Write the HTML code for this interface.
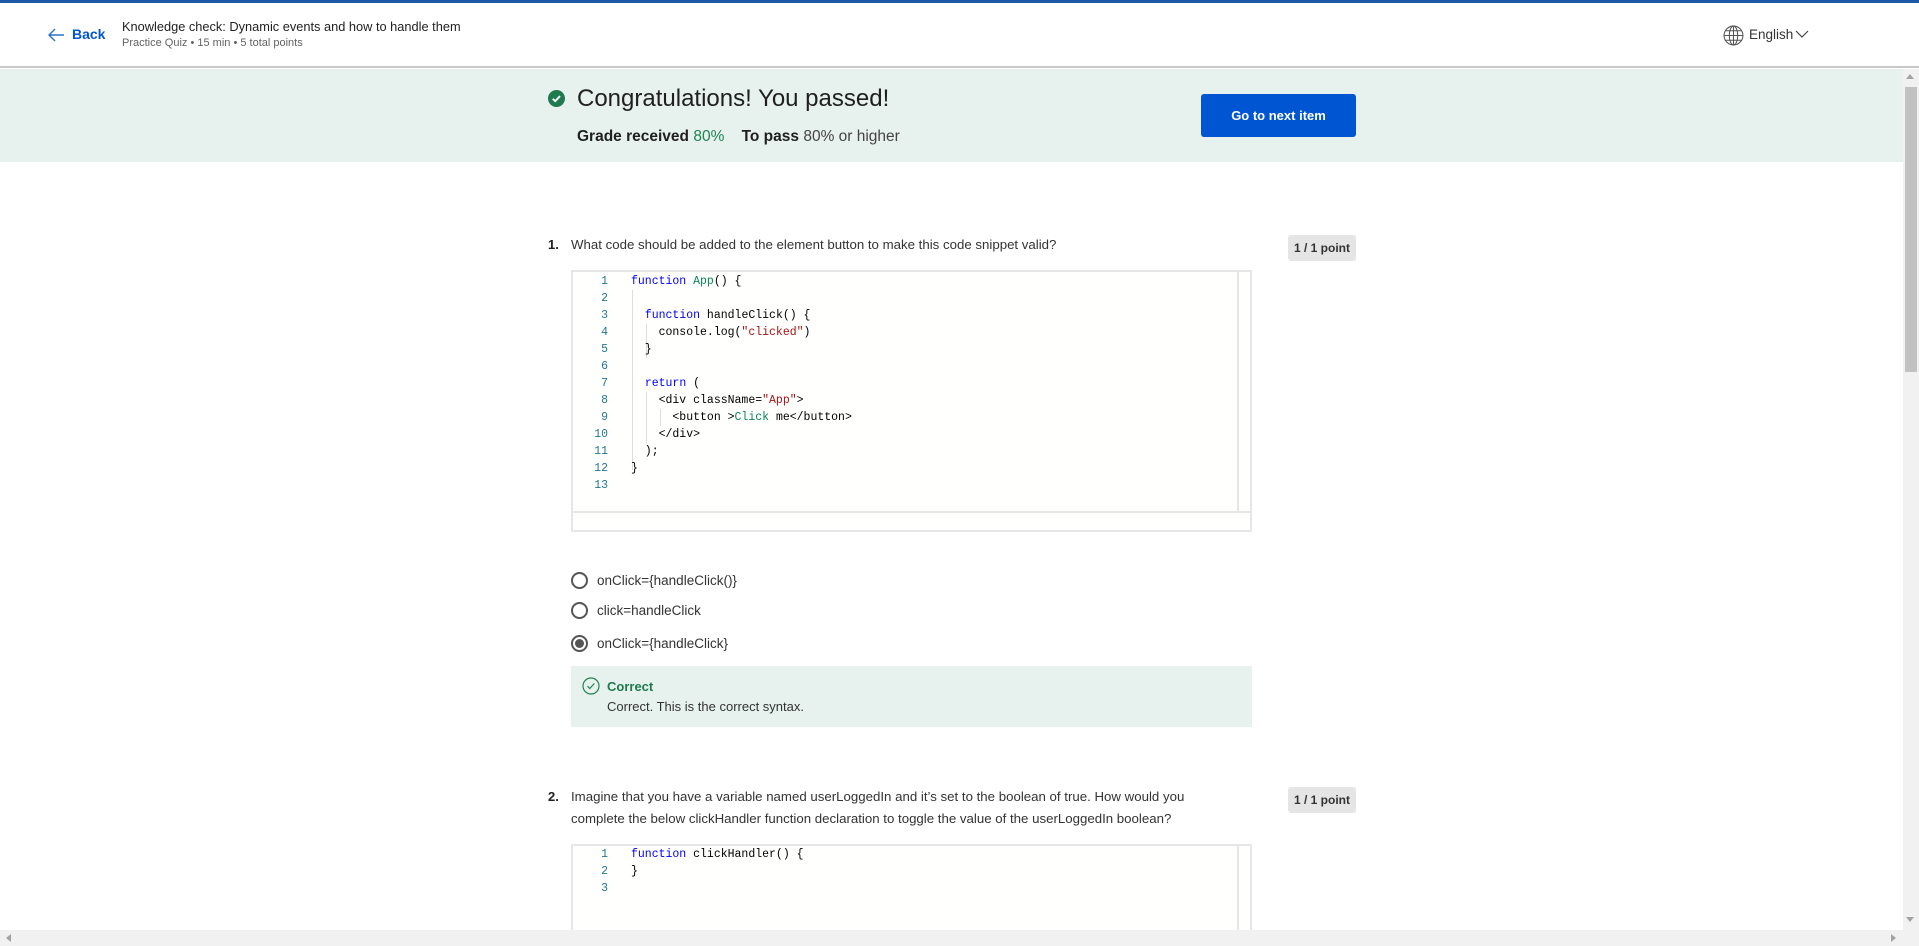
<!DOCTYPE html>
<html><head><meta charset="utf-8"><style>
*{margin:0;padding:0;box-sizing:border-box}
body{width:1919px;height:946px;overflow:hidden;background:#fff;font-family:"Liberation Sans",sans-serif;color:#1f1f1f;position:relative}
.abs{position:absolute}
.topbar{left:0;top:0;width:1919px;height:3px;background:#1d58a8}
.header{left:0;top:3px;width:1919px;height:65px;border-bottom:2px solid #c8c8c8;background:#fff}
.banner{left:0;top:69px;width:1903px;height:93px;background:#e7f1ee}
.code{font-family:"Liberation Mono",monospace;font-size:11.5px;line-height:17px;white-space:pre}
.ln{color:#237893;text-align:right;width:36px}
.kw{color:#0000ff}.fn{color:#795e26}.str{color:#a31515}.tx{color:#098658}
.radio{width:17px;height:17px;border:2px solid #555;border-radius:50%}
.opt{font-size:13.5px;color:#333}
.badge{background:#e5e5e5;border-radius:3px;font-size:12px;font-weight:bold;color:#333;padding:6px 6px}
</style></head><body>
<div class="abs topbar"></div>
<div class="abs header"></div>
<svg class="abs" style="left:47px;top:27px" width="18" height="16" viewBox="0 0 18 16"><path d="M17 8H2M8 2L2 8l6 6" stroke="#2a73cc" stroke-width="1.4" fill="none"/></svg>
<div class="abs" style="left:72px;top:26px;font-size:14px;color:#0056d2;font-weight:bold">Back</div>
<div class="abs" style="left:122px;top:19px;font-size:12.8px;color:#1f1f1f">Knowledge check: Dynamic events and how to handle them</div>
<div class="abs" style="left:122px;top:37px;font-size:11px;color:#636363">Practice Quiz • 15 min • 5 total points</div>
<svg class="abs" style="left:1723px;top:25px" width="21" height="21" viewBox="0 0 20 20"><g fill="none" stroke="#555" stroke-width="1"><circle cx="10" cy="10" r="9"/><ellipse cx="10" cy="10" rx="4" ry="9"/><path d="M1 10h18M2.5 5.5h15M2.5 14.5h15M10 1v18"/></g></svg>
<div class="abs" style="left:1749px;top:27px;font-size:13.5px;color:#333">English</div>
<svg class="abs" style="left:1795px;top:30px" width="14" height="9" viewBox="0 0 14 9"><path d="M1 1l6 6 6-6" stroke="#444" stroke-width="1.2" fill="none"/></svg>

<div class="abs banner"></div>
<svg class="abs" style="left:548px;top:90px" width="17" height="17" viewBox="0 0 16 16"><circle cx="8" cy="8" r="8" fill="#1f7a4d"/><path d="M4.5 8.3l2.3 2.2 4.5-4.8" stroke="#fff" stroke-width="1.8" fill="none"/></svg>
<div class="abs" style="left:577px;top:85px;font-size:24px;color:#1f1f1f">Congratulations! You passed!</div>
<div class="abs" style="left:577px;top:128px;font-size:15.5px;color:#1f1f1f"><b>Grade received</b> <span style="color:#1f8354">80%</span>&nbsp;&nbsp;&nbsp;&nbsp;<b>To pass</b> <span style="color:#444">80% or higher</span></div>
<div class="abs" style="left:1201px;top:94px;width:155px;height:43px;background:#0056d2;border-radius:3px;color:#fff;font-size:13px;font-weight:bold;text-align:center;line-height:43px">Go to next item</div>

<!-- Q1 -->
<div class="abs" style="left:548px;top:237px;font-size:13px;font-weight:bold">1.</div>
<div class="abs" style="left:571px;top:237px;font-size:13.25px;color:#333">What code should be added to the element button to make this code snippet valid?</div>
<div class="abs badge" style="left:1288px;top:235px">1 / 1 point</div>
<div class="abs" style="left:571px;top:270px;width:681px;height:262px;border:2px solid #e6e6e6;background:#fffffd"></div>
<div class="abs" style="left:573px;top:511px;width:677px;height:2px;background:#e6e6e6"></div>
<div class="abs" style="left:1237px;top:272px;width:2px;height:239px;background:#e6e6e6"></div>
<div class="abs code ln" style="left:572px;top:273px">1
2
3
4
5
6
7
8
9
10
11
12
13</div>
<div class="abs" style="left:632px;top:290px;width:1px;height:180px;background:#ddd"></div>
<div class="abs" style="left:646px;top:324px;width:1px;height:34px;background:#ddd"></div>
<div class="abs" style="left:646px;top:392px;width:1px;height:51px;background:#ddd"></div>
<div class="abs" style="left:660px;top:409px;width:1px;height:17px;background:#ddd"></div>
<div class="abs code" style="left:631px;top:273px;color:#000"><span class="kw">function</span> <span class="tx">App</span>() {

  <span class="kw">function</span> handleClick() {
    console.log(<span class="str">"clicked"</span>)
  }

  <span class="kw">return</span> (
    &lt;div className=<span class="str">"App"</span>&gt;
      &lt;button &gt;<span class="tx">Click</span> me&lt;/button&gt;
    &lt;/div&gt;
  );
}
</div>

<div class="abs radio" style="left:571px;top:572px"></div>
<div class="abs opt" style="left:597px;top:573px">onClick={handleClick()}</div>
<div class="abs radio" style="left:571px;top:602px"></div>
<div class="abs opt" style="left:597px;top:603px">click=handleClick</div>
<div class="abs radio" style="left:571px;top:635px"><div style="width:9px;height:9px;border-radius:50%;background:#555;margin:2px"></div></div>
<div class="abs opt" style="left:597px;top:636px">onClick={handleClick}</div>

<div class="abs" style="left:571px;top:666px;width:681px;height:61px;background:#e7f1ee"></div>
<svg class="abs" style="left:582px;top:677px" width="18" height="18" viewBox="0 0 18 18"><circle cx="9" cy="9" r="8" fill="none" stroke="#1f8354" stroke-width="1.2"/><path d="M5.5 9.2l2.3 2.3 4.5-5" stroke="#1f8354" stroke-width="1.2" fill="none"/></svg>
<div class="abs" style="left:607px;top:679px;font-size:13px;color:#1f7a4d;font-weight:bold">Correct</div>
<div class="abs" style="left:607px;top:699px;font-size:13px;color:#333">Correct. This is the correct syntax.</div>

<!-- Q2 -->
<div class="abs" style="left:548px;top:789px;font-size:13px;font-weight:bold">2.</div>
<div class="abs" style="left:571px;top:786px;font-size:13.25px;color:#333;line-height:22px;width:640px">Imagine that you have a variable named userLoggedIn and it’s set to the boolean of true. How would you complete the below clickHandler function declaration to toggle the value of the userLoggedIn boolean?</div>
<div class="abs badge" style="left:1288px;top:787px">1 / 1 point</div>
<div class="abs" style="left:571px;top:844px;width:681px;height:100px;border:2px solid #e6e6e6;border-bottom:none;background:#fffffd"></div>
<div class="abs" style="left:1237px;top:846px;width:2px;height:90px;background:#e6e6e6"></div>
<div class="abs code ln" style="left:572px;top:846px">1
2
3</div>
<div class="abs code" style="left:631px;top:846px;color:#000"><span class="kw">function</span> clickHandler() {
}</div>

<!-- scrollbars -->
<div class="abs" style="left:1903px;top:69px;width:16px;height:861px;background:#f1f1f1"></div>
<div class="abs" style="left:1905px;top:87px;width:12px;height:285px;background:#c1c1c1"></div>
<div class="abs" style="left:1906px;top:74px;width:0;height:0;border-left:4px solid transparent;border-right:4px solid transparent;border-bottom:5px solid #a3a3a3"></div>
<div class="abs" style="left:1906px;top:917px;width:0;height:0;border-left:4px solid transparent;border-right:4px solid transparent;border-top:5px solid #a3a3a3"></div>
<div class="abs" style="left:0;top:930px;width:1919px;height:16px;background:#f1f1f1"></div>
<div class="abs" style="left:6px;top:934px;width:0;height:0;border-top:4px solid transparent;border-bottom:4px solid transparent;border-right:5px solid #a3a3a3"></div>
<div class="abs" style="left:1891px;top:934px;width:0;height:0;border-top:4px solid transparent;border-bottom:4px solid transparent;border-left:5px solid #a3a3a3"></div>
</body></html>
